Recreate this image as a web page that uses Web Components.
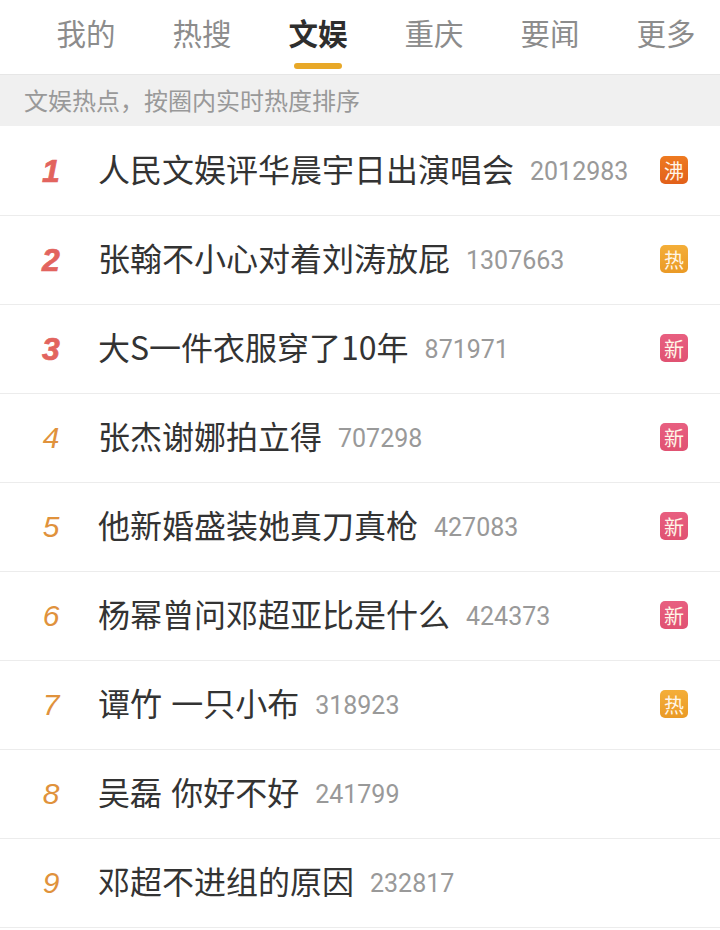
<!DOCTYPE html>
<html lang="zh">
<head>
<meta charset="utf-8">
<title>文娱</title>
<style>
    html, body {
        margin: 0;
        height: 930px;
        overflow: hidden;
        background: #fff;
        font-family: "Noto Sans CJK SC", "Noto Sans", sans-serif;
    }
</style>
</head>
<body>
<hot-page>
    <tab-bar>
        <tab-item>我的</tab-item>
        <tab-item>热搜</tab-item>
        <tab-item active>文娱</tab-item>
        <tab-item>重庆</tab-item>
        <tab-item>要闻</tab-item>
        <tab-item>更多</tab-item>
    </tab-bar>
    <notice-bar>文娱热点，按圈内实时热度排序</notice-bar>
    <hot-row rank="1" count="2012983" badge="沸">人民文娱评华晨宇日出演唱会</hot-row>
    <hot-row rank="2" count="1307663" badge="热">张翰不小心对着刘涛放屁</hot-row>
    <hot-row rank="3" count="871971" badge="新">大S一件衣服穿了10年</hot-row>
    <hot-row rank="4" count="707298" badge="新">张杰谢娜拍立得</hot-row>
    <hot-row rank="5" count="427083" badge="新">他新婚盛装她真刀真枪</hot-row>
    <hot-row rank="6" count="424373" badge="新">杨幂曾问邓超亚比是什么</hot-row>
    <hot-row rank="7" count="318923" badge="热">谭竹 一只小布</hot-row>
    <hot-row rank="8" count="241799">吴磊 你好不好</hot-row>
    <hot-row rank="9" count="232817">邓超不进组的原因</hot-row>
</hot-page>

<script>
class HotPage extends HTMLElement {
    constructor() {
        super();
        this.attachShadow({ mode: 'open' });
        this.shadowRoot.innerHTML = `
            <style>
                :host { display: flex; flex-direction: column; }
            </style>
            <slot></slot>
        `;
    }
}

class TabBar extends HTMLElement {
    constructor() {
        super();
        this.attachShadow({ mode: 'open' });
        this.shadowRoot.innerHTML = `
            <style>
                :host {
                    display: grid;
                    grid-template-columns: repeat(6, 116px);
                    padding-left: 28px;
                    height: 75px;
                    box-sizing: border-box;
                    border-bottom: 1px solid #e6e6e6;
                    overflow: hidden;
                }
            </style>
            <slot></slot>
        `;
    }
}

class TabItem extends HTMLElement {
    constructor() {
        super();
        this.attachShadow({ mode: 'open' });
        this.shadowRoot.innerHTML = `
            <style>
                :host {
                    display: flex;
                    flex-direction: column;
                    align-items: center;
                    padding-top: 10px;
                    font-size: 29.5px;
                    line-height: 44px;
                    color: #8c8c8c;
                }
                :host([active]) {
                    color: #2e2e2e;
                    font-weight: 700;
                }
                #bar {
                    width: 48px;
                    height: 6px;
                    margin-top: 9px;
                    border-radius: 3px;
                }
                :host([active]) #bar { background: #e8a828; }
            </style>
            <slot></slot>
            <div id="bar"></div>
        `;
    }
}

class NoticeBar extends HTMLElement {
    constructor() {
        super();
        this.attachShadow({ mode: 'open' });
        this.shadowRoot.innerHTML = `
            <style>
                :host {
                    display: flex;
                    align-items: center;
                    height: 52px;
                    box-sizing: border-box;
                    padding: 0 0 3px 24px;
                    background: linear-gradient(#f0f0f0 51px, #fff 51px);
                    color: #999;
                    font-size: 24px;
                }
            </style>
            <slot></slot>
        `;
    }
}

class HotRow extends HTMLElement {
    constructor() {
        super();
        this.attachShadow({ mode: 'open' });
        const rank = Number(this.getAttribute('rank'));
        const badge = this.getAttribute('badge');
        const kind = { '沸': 'boil', '热': 'hot', '新': 'new' }[badge] || '';
        this.shadowRoot.innerHTML = `
            <style>
                :host {
                    display: flex;
                    align-items: center;
                    height: 89px;
                    box-sizing: border-box;
                    border-bottom: 1px solid #ececec;
                }
                #rank {
                    width: 30px;
                    margin: 0 32px 0 36px;
                    text-align: center;
                    font: italic 400 30px "Liberation Sans", sans-serif;
                    color: #e0923c;
                }
                #rank.top {
                    font-size: 32px;
                    font-weight: 700;
                    color: #e2645e;
                    -webkit-text-stroke: 0.7px #e2645e;
                    padding-top: 1px;
                }
                #title {
                    font-size: 32px;
                    color: #333;
                    white-space: nowrap;
                    word-spacing: 2px;
                    margin-bottom: 6px;
                }
                #count {
                    margin-left: 16px;
                    font: 25px Roboto, sans-serif;
                    color: #999;
                }
                #badge {
                    margin-left: auto;
                    margin-right: 32px;
                    margin-bottom: 2px;
                    width: 28px;
                    height: 28px;
                    border-radius: 5px;
                    display: flex;
                    align-items: center;
                    justify-content: center;
                    font-size: 20px;
                    color: #fff6e8;
                }
                #badge.boil { background: linear-gradient(#ee7a20, #e2601a); }
                #badge.hot { background: linear-gradient(#f4ae38, #ea9a26); }
                #badge.new { background: linear-gradient(#e85f80, #e05272); }
            </style>
            <span id="rank" class="${rank <= 3 ? 'top' : ''}">${rank}</span>
            <span id="title"><slot></slot></span>
            <span id="count">${this.getAttribute('count')}</span>
            ${badge ? `<span id="badge" class="${kind}">${badge}</span>` : ''}
        `;
    }
}

customElements.define('hot-page', HotPage);
customElements.define('tab-bar', TabBar);
customElements.define('tab-item', TabItem);
customElements.define('notice-bar', NoticeBar);
customElements.define('hot-row', HotRow);
</script>
</body>
</html>
